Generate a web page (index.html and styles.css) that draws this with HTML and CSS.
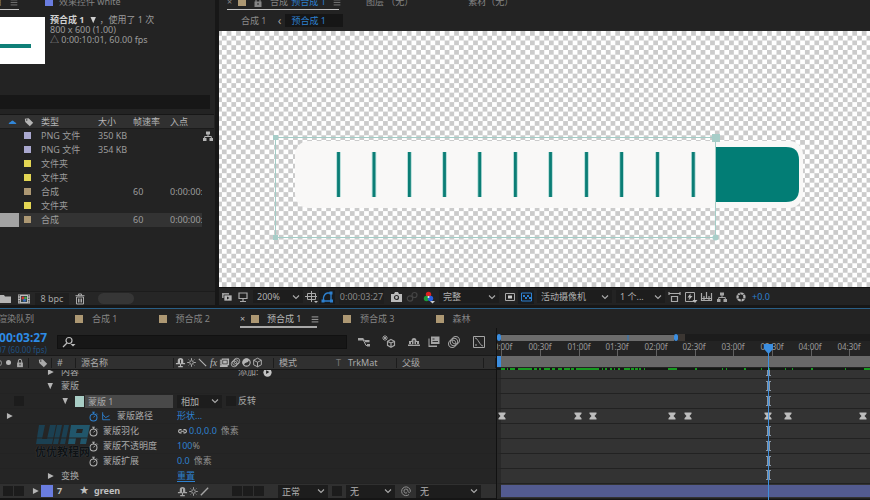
FILE: index.html
```html
<!DOCTYPE html>
<html>
<head>
<meta charset="utf-8">
<title>预合成 1</title>
<link rel="stylesheet" href="styles.css">
</head>
<body>
<svg class="sprite" aria-hidden="true">
  <symbol id="tag" viewBox="0 0 12 12"><path d="M1 2l4.500-.5L11 7l-4 4L1.500 6z" fill="currentColor"/><circle cx="3.300" cy="3.600" r=".9" fill="#2f2f2f"/></symbol>
  <symbol id="menu" viewBox="0 0 12 12"><path d="M2 3.500h8M2 6.500h8M2 9.500h8" stroke="currentColor"/></symbol>
  <symbol id="chev" viewBox="0 0 12 12"><path d="M3 4.500l3 3 3-3" fill="none" stroke="currentColor" stroke-width="1.100"/></symbol>
  <symbol id="right" viewBox="0 0 12 12"><path d="M3.500 2.500l7 3.500-7 3.500z" fill="currentColor"/></symbol>
  <symbol id="down" viewBox="0 0 12 12"><path d="M3 2.500h6.500L6.300 10z" fill="currentColor"/></symbol>
  <symbol id="tree" viewBox="0 0 12 12"><path d="M4 1.500h4v3H4zM1 8h3.500v3H1zM7.500 8H11v3H7.500z" fill="currentColor"/><path d="M6 4v2.500M2.700 8V6.500h6.600V8" fill="none" stroke="currentColor"/></symbol>
  <symbol id="lock" viewBox="0 0 12 12"><path d="M2.500 5.500h7V11h-7z" fill="currentColor"/><path d="M4 6V3.500a2 2 0 0 1 4 0V6" fill="none" stroke="currentColor" stroke-width="1.200"/><path d="M6 7v2" stroke="#222"/></symbol>
  <symbol id="watch" viewBox="0 0 12 12"><circle cx="6" cy="7" r="3.800" fill="none" stroke="currentColor" stroke-width="1.100"/><path d="M4.500 1.300h3M6 1.300v2M6 7l1.800-2M9.500 2.700l1 1" fill="none" stroke="currentColor"/></symbol>
  <symbol id="graph" viewBox="0 0 12 12"><path d="M2 1.500v9h9M2 4l3.500 4L10 5.500" fill="none" stroke="currentColor" stroke-width="1.100"/></symbol>
  <symbol id="shy" viewBox="0 0 12 12"><path d="M3 7V4a3 3 0 0 1 6 0v3zM1 6.500h10v1.500H1z" fill="currentColor"/><path d="M6 7v4M3.500 10.500h5" stroke="currentColor" stroke-width="1.200"/><path d="M6 3v4" stroke="#2b2b2b"/></symbol>
  <symbol id="sun" viewBox="0 0 12 12"><circle cx="6" cy="6" r="2" fill="none" stroke="currentColor"/><path d="M6 1.300v2M6 8.700v2M1.300 6h2M8.700 6h2" stroke="currentColor"/><path d="M2.700 2.700l1 1M8.300 8.300l1 1M9.300 2.700l-1 1M3.700 8.300l-1 1" stroke="currentColor" stroke-width=".7"/></symbol>
  <symbol id="back" viewBox="0 0 12 12"><path d="M2 2l8 8" stroke="currentColor" stroke-width="1.200"/></symbol>
  <symbol id="slash" viewBox="0 0 12 12"><path d="M2 10l8-8" stroke="currentColor" stroke-width="1.500"/></symbol>
  <symbol id="film" viewBox="0 0 12 12"><path d="M1 3h2V1.500h8V9H9.500v1.800H1z" fill="currentColor"/><path d="M4 3.500h5v4H4z" fill="none" stroke="#333" stroke-width=".8"/><path d="M2 4v6" stroke="#333" stroke-dasharray="1 1"/></symbol>
  <symbol id="blur" viewBox="0 0 12 12"><g fill="none" stroke="currentColor" stroke-width=".9"><circle cx="7.500" cy="4.500" r="3.200"/><circle cx="6" cy="6" r="3.200"/><circle cx="4.500" cy="7.500" r="3.200"/></g></symbol>
  <symbol id="adjust" viewBox="0 0 12 12"><circle cx="6" cy="6" r="4" fill="none" stroke="currentColor" stroke-width="1.200"/><path d="M9 3a4.200 4.200 0 1 0-6 6q1-3 3-3t3-3z" fill="currentColor"/></symbol>
  <symbol id="cube" viewBox="0 0 12 12"><path d="M6 1.300l4.200 2.200v5L6 10.700 1.800 8.500v-5zM1.800 3.500L6 5.700l4.200-2.200M6 5.700v5" fill="none" stroke="currentColor"/></symbol>
  <symbol id="cubes" viewBox="0 0 14 14"><path d="M9 4.500l3.500 1.800v4L9 12.300l-3.500-2v-4zM5.500 6.300L9 8l3.500-1.700M9 8v4" fill="none" stroke="currentColor" stroke-width="1.200"/><path d="M3 0v6M0 3h6M1 1l4 4M5 1L1 5" stroke="currentColor" stroke-width=".9"/></symbol>
  <symbol id="flow" viewBox="0 0 14 14"><path d="M1 3h5.500v2.500H1zM8 5h4.500v2.300H8zM10 9h3v2.500h-3z" fill="currentColor"/><path d="M6 4.500l3 6h2M6 4.500L9 6" fill="none" stroke="currentColor"/></symbol>
  <symbol id="shyall" viewBox="0 0 14 14"><path d="M2 9V6h2.500a2.500 3 0 0 1 5 0H12v3zM1 9.500h12V11H1z" fill="currentColor"/><path d="M7 5v5M4.500 7v2M9.500 7v2" stroke="#232323"/></symbol>
  <symbol id="frames" viewBox="0 0 14 14"><path d="M4 1.500h8.500V9H4z" fill="currentColor"/><path d="M2.500 3.500v7h7.500v1.500H1.500v-8.500z" fill="currentColor"/><path d="M5.500 3.500h2v1h-2zM5.500 6h5.500v1H5.500z" fill="#333"/></symbol>
  <symbol id="chart" viewBox="0 0 14 14"><path d="M1.500 1.500h11v11h-11z" fill="none" stroke="currentColor"/><path d="M3 3c3 0 5 8 8 8M3 10h2" fill="none" stroke="currentColor"/></symbol>
  <symbol id="spiral" viewBox="0 0 12 12"><path d="M9 9.500A4.400 4.400 0 1 1 10.400 6c0 2-2.400 2-2.400 0a2 2 0 1 0-1 1.800" fill="none" stroke="currentColor"/></symbol>
  <symbol id="key" viewBox="0 0 8 8"><path d="M.5.500h7v1.200L5.500 4l2 2.300v1.200h-7V6.300l2-2.300-2-2.300z" fill="#bdbdbd"/></symbol>
</svg>

<main class="app">
  <div class="upper">
    <section class="project">
      <div class="tabs">
        <span class="tab on lead"><span>目</span><svg class="i10"><use href="#menu"/></svg></span>
        <span class="tab effects"><i class="sw blue"></i><span>效果控件 white</span></span>
      </div>
      <div class="info">
        <div class="thumb"><i></i></div>
        <div class="meta">
          <div class="title"><b>预合成 1</b><svg class="i10"><use href="#down"/></svg><span>，使用了 1 次</span></div>
          <div>800 x 600 (1.00)</div>
          <div>△ 0:00:10:01, 60.00 fps</div>
        </div>
      </div>
      <input class="find" type="text" aria-label="搜索项目">
      <table class="items">
        <colgroup><col class="c1"><col class="c2"><col class="c3"><col class="c4"><col class="c5"><col class="c6"><col></colgroup>
        <thead><tr><th><svg class="sort" viewBox="0 0 8 4"><path d="M0 4q1-2 2-2Q4-1 6 2q1 0 2 2z" fill="#3186d8"/></svg></th><th><svg class="i10"><use href="#tag"/></svg></th><th>类型</th><th>大小</th><th>帧速率</th><th colspan="2">入点</th></tr></thead>
        <tbody>
          <tr><td></td><td><i class="sw lilac"></i></td><td>PNG 文件</td><td>350 KB</td><td></td><td></td><td class="net"><svg class="i12"><use href="#tree"/></svg></td></tr>
          <tr><td></td><td><i class="sw lilac"></i></td><td>PNG 文件</td><td>354 KB</td><td></td><td></td><td></td></tr>
          <tr><td></td><td><i class="sw yellow"></i></td><td>文件夹</td><td></td><td></td><td></td><td></td></tr>
          <tr><td></td><td><i class="sw yellow"></i></td><td>文件夹</td><td></td><td></td><td></td><td></td></tr>
          <tr><td></td><td><i class="sw tan"></i></td><td>合成</td><td></td><td>60</td><td>0:00:00:</td><td></td></tr>
          <tr><td></td><td><i class="sw yellow"></i></td><td>文件夹</td><td></td><td></td><td></td><td></td></tr>
          <tr class="sel"><td></td><td><i class="sw tan"></i></td><td>合成</td><td></td><td>60</td><td>0:00:00:</td><td></td></tr>
        </tbody>
      </table>
      <div class="pfoot">
        <button aria-label="新建文件夹"><svg class="i12" viewBox="0 0 12 12"><path d="M0 2h4l1 1.500h6V10H0z" fill="#b5b5b5"/></svg></button>
        <button aria-label="新建合成"><svg class="w14" viewBox="0 0 14 12"><path d="M1 1.500h12v9H1z" fill="#bbb"/><path d="M2.200 2v8M11.800 2v8" stroke="#333" stroke-dasharray="1.500 1"/><path d="M4 3h6v6H4z" fill="#344"/><circle cx="6" cy="5" r="1.500" fill="#c33"/><circle cx="8.500" cy="5" r="1.300" fill="#4a4"/><circle cx="7.500" cy="7.300" r="1.500" fill="#36b"/></svg></button>
        <button class="bpc">8 bpc</button>
        <button aria-label="删除"><svg class="i12" viewBox="0 0 12 12"><path d="M2.500 4h7v7h-7zM1.500 2.700h9M4.500 2.500V1h3v1.500M4.500 5.500v4M6 5.500v4M7.500 5.500v4" fill="none" stroke="#aaa"/></svg></button>
        <i class="pill"></i>
      </div>
    </section>

    <section class="viewer">
      <div class="tabs">
        <span class="tab on comp"><span class="x">×</span><i class="sw tan"></i><svg class="i12"><use href="#lock"/></svg><span>合成 <em>预合成 1</em></span><svg class="i10"><use href="#menu"/></svg></span>
        <span class="tab">图层 （无）</span>
        <span class="tab footage">素材（无）</span>
      </div>
      <nav class="crumbs"><a href="#">合成 1</a><span>‹</span><a class="here" href="#">预合成 1</a></nav>
      <svg class="canvas" aria-label="合成画面">
        <defs><pattern id="checks" width="9.480" height="9.480" patternUnits="userSpaceOnUse" x="2.900" y="0"><path d="M0 0h9.480v9.480H0z" fill="#fff"/><path d="M4.740 0h4.740v4.740H4.740zM0 4.740h4.740v4.740H0z" fill="#cbcbcb"/></pattern></defs>
        <rect width="100%" height="100%" fill="url(#checks)"/>
        <rect x="76" y="110" width="508" height="67" rx="14" fill="#f9f8f7"/>
        <path d="M497 116h70q13 0 13 13v29q0 13-13 13h-70z" fill="#027d75"/>
        <path d="M119.500 121v45M155 121v45M190.400 121v45M225.500 121v45M260.700 121v45M296.400 121v45M331.500 121v45M367.500 121v45M402.600 121v45M438.500 121v45M474.300 121v45" stroke="#a9d8d3" stroke-width="4.500"/>
        <path d="M119.500 121v45M155 121v45M190.400 121v45M225.500 121v45M260.700 121v45M296.400 121v45M331.500 121v45M367.500 121v45M402.600 121v45M438.500 121v45M474.300 121v45" stroke="#0b7d75" stroke-width="2.800"/>
        <path d="M56.500 106.500h440v100h-440z" fill="none" stroke="#a3cdc7"/>
        <path d="M54 104h5v5h-5zM493 103h8v8h-8z" fill="#a7cdc8"/><path d="M54 204h5v5h-5z" fill="#a7cdc8"/><circle cx="496.500" cy="206.500" r="3" fill="#a7cdc8"/>
      </svg>
      <div class="vfoot">
        <button aria-label="始终预览"><svg viewBox="0 0 16 14"><path d="M3 3h7v5H3z" fill="#999"/><path d="M5 5h8v6H5z" fill="#b5b5b5" stroke="#222" stroke-width=".7"/><path d="M8 6.500v3l2.500-1.500z" fill="#222"/></svg></button>
        <button aria-label="主查看器"><svg viewBox="0 0 16 14"><path d="M4 3h8v5.500H4zM8 9v2.500M5 11.500h6" fill="none" stroke="#aaa" stroke-width="1.200"/></svg></button>
        <span class="drop zoom"><select aria-label="放大率"><option>200%</option></select><svg class="i12"><use href="#chev"/></svg></span>
        <button aria-label="网格和参考线"><svg viewBox="0 0 16 14"><path d="M4.500 3.500h8v6h-8zM8.500 1v11M2 6.500h12" fill="none" stroke="#aaa"/><path d="M11 11h4l-2 2z" fill="#bbb"/></svg></button>
        <button class="lit" aria-label="蒙版可见性"><svg viewBox="0 0 16 14"><path d="M4.500 11V7.500q1-4 4-4.500H12v8z" fill="none" stroke="#2d80cf" stroke-width="1.300"/><path d="M2.500 9.500h3v3h-3zM11 9.500h3v3h-3zM10.500 1.500h3v3h-3z" fill="#2d80cf"/></svg></button>
        <button class="time">0:00:03:27</button>
        <button aria-label="快照"><svg viewBox="0 0 16 14"><path d="M3 4h3l1-2h3l1 2h3v8H3z" fill="#bbb"/><circle cx="8.500" cy="7.500" r="2" fill="none" stroke="#2a2a2a" stroke-width="1.200"/></svg></button>
        <button aria-label="显示快照"><svg viewBox="0 0 16 14"><g fill="none" stroke="#444" stroke-width="1.200"><circle cx="10.500" cy="5" r="2.500"/><circle cx="6" cy="8.500" r="2.700"/></g></svg></button>
        <button aria-label="通道"><svg viewBox="0 0 16 14"><circle cx="8.500" cy="4.500" r="2.700" fill="#d22"/><circle cx="6.500" cy="8.500" r="2.700" fill="#1b9d3a"/><circle cx="10.500" cy="8.500" r="2.700" fill="#2a5fe0"/><circle cx="8.500" cy="7" r="1" fill="#eee"/><path d="M10 11h5l-2.500 2.500z" fill="#ccc"/></svg></button>
        <span class="drop res"><select aria-label="分辨率"><option>完整</option></select><svg class="i12"><use href="#chev"/></svg></span>
        <button aria-label="目标区域"><svg viewBox="0 0 16 14"><path d="M3.500 3.500h9v7h-9z" fill="none" stroke="#aaa"/><path d="M6 5.500h4v3H6z" fill="#ccc"/></svg></button>
        <button class="lit" aria-label="透明网格"><svg viewBox="0 0 16 14"><path d="M3.500 3h10v8h-10z" fill="none" stroke="#2d80cf"/><path d="M5 5h2v2H5zM9 5h2v2H9zM7 7h2v2H7zM11 7h2v2h-2z" fill="#2d80cf"/></svg></button>
        <span class="drop cam"><select aria-label="视图"><option>活动摄像机</option></select><svg class="i12"><use href="#chev"/></svg></span>
        <span class="drop views"><select aria-label="视图布局"><option>1 个...</option></select><svg class="i12"><use href="#chev"/></svg></span>
        <button aria-label="像素长宽比"><svg viewBox="0 0 16 14"><path d="M5.500 6.500h6v5h-6zM3 2v3M14 2v3M3 3.500h11" fill="none" stroke="#aaa" stroke-width="1.200"/></svg></button>
        <button aria-label="快速预览"><svg viewBox="0 0 16 14"><path d="M3.500 2.500h9v9h-9z" fill="none" stroke="#aaa"/><path d="M8.500 3.500L5.500 7.500h2l-1 3 4-4.500h-2z" fill="#bbb"/><path d="M10.500 10h5L13 13z" fill="#bbb"/></svg></button>
        <button aria-label="时间轴"><svg viewBox="0 0 16 14"><path d="M3.500 3v7.500h10V3M6 6v4M8.500 2v6M11 6v4M3.500 8.500h10" fill="none" stroke="#aaa" stroke-width="1.200"/></svg></button>
        <button class="tree" aria-label="流程图"><svg class="i12"><use href="#tree"/></svg></button>
        <button aria-label="重置曝光度"><svg viewBox="0 0 16 14"><circle cx="8" cy="7" r="3.500" fill="none" stroke="#b5b5b5" stroke-width="2.200"/><path d="M6 2l2 3M12 4L9.500 5M12.500 9L10 8.500M8 12l.5-3M3.500 9.500L6 8M4 4.500L6.500 6" stroke="#252525" stroke-width=".7"/></svg></button>
        <a href="#">+0.0</a>
      </div>
    </section>
  </div>

  <section class="timeline">
    <div class="ttabs">
      <span class="queue">渲染队列</span>
      <span class="ttab"><i class="sw tan"></i>合成 1</span>
      <span class="ttab second"><i class="sw tan"></i>预合成 2</span>
      <span class="ttab on"><span class="x">×</span><i class="sw tan"></i>预合成 1<svg class="i10"><use href="#menu"/></svg></span>
      <span class="ttab third"><i class="sw tan"></i>预合成 3</span>
      <span class="ttab fourth"><i class="sw tan"></i>森林</span>
    </div>
    <div class="split">
      <div class="outline">
        <div class="tools">
          <div class="clock"><b>0:00:03:27</b><small>00207 (60.00 fps)</small></div>
          <label class="search"><svg viewBox="0 0 16 12"><circle cx="8" cy="4.500" r="3" fill="none" stroke="#bbb" stroke-width="1.200"/><path d="M6 7l-4 4" stroke="#bbb" stroke-width="1.300"/><path d="M9.500 8h5L12 10.500z" fill="#bbb"/></svg><input type="text" aria-label="搜索图层"></label>
          <div class="tbtns">
            <button aria-label="微型流程图"><svg class="i14"><use href="#flow"/></svg></button>
            <button aria-label="草图 3D"><svg class="i14"><use href="#cubes"/></svg></button>
            <button aria-label="隐藏图层"><svg class="i14"><use href="#shyall"/></svg></button>
            <button aria-label="帧混合"><svg class="i14"><use href="#frames"/></svg></button>
            <button aria-label="运动模糊"><svg class="i14"><use href="#blur"/></svg></button>
            <button aria-label="图表编辑器"><svg class="i14"><use href="#chart"/></svg></button>
          </div>
        </div>
        <div class="heads">
          <span class="av"><i class="eye"></i><i class="dot"></i><svg class="i10"><use href="#lock"/></svg></span>
          <span class="hl"><svg class="i10"><use href="#tag"/></svg></span>
          <span class="hn">#</span>
          <span class="hs">源名称</span>
          <span class="sws"><svg><use href="#shy"/></svg><svg><use href="#sun"/></svg><svg><use href="#back"/></svg><i class="fx">fx</i><svg><use href="#film"/></svg><svg><use href="#blur"/></svg><svg><use href="#adjust"/></svg><svg><use href="#cube"/></svg></span>
          <span class="hm">模式</span><span class="ht">T</span><span class="hk">TrkMat</span><span class="hp">父级</span><span></span>
        </div>
        <div class="layers">
          <div class="row cut"><div class="nm l1"><svg><use href="#right"/></svg><span>内容</span></div><div class="val add">添加:<svg viewBox="0 0 12 12"><circle cx="6" cy="6" r="4.500" fill="#c4c4c4"/><path d="M4.500 3.500v4l3.500-2z" fill="#222"/></svg></div></div>
          <div class="row"><div class="nm l1"><svg><use href="#down"/></svg><span>蒙版</span></div></div>
          <div class="row"><div class="nm l2"><i class="box"></i><svg><use href="#down"/></svg><i class="mint"></i><span class="field">蒙版 1</span></div><div class="val"><span class="drop mode"><select aria-label="蒙版模式"><option>相加</option></select><svg class="i12"><use href="#chev"/></svg></span><label class="inv"><input type="checkbox">反转</label></div></div>
          <div class="row"><div class="nm l3 keyed"><svg><use href="#right"/></svg><svg class="watch b"><use href="#watch"/></svg><svg class="b"><use href="#graph"/></svg><span>蒙版路径</span></div><div class="val"><a href="#">形状...</a></div></div>
          <div class="row"><div class="nm l3"><svg class="watch"><use href="#watch"/></svg><span>蒙版羽化</span></div><div class="val"><svg class="chain" viewBox="0 0 12 12"><path d="M5 4H3.500a1.700 1.700 0 0 0 0 3.500H5M7 4h1.500a1.700 1.700 0 0 1 0 3.500H7M4 5.700h4" fill="none" stroke="#bbb" stroke-width="1.200"/></svg><a href="#">0.0,0.0</a>像素</div></div>
          <div class="row"><div class="nm l3"><svg class="watch"><use href="#watch"/></svg><span>蒙版不透明度</span></div><div class="val pct"><a href="#">100</a>%</div></div>
          <div class="row"><div class="nm l3"><svg class="watch"><use href="#watch"/></svg><span>蒙版扩展</span></div><div class="val"><a href="#">0.0</a>像素</div></div>
          <div class="row"><div class="nm l1"><svg><use href="#right"/></svg><span>变换</span></div><div class="val"><a class="reset" href="#">重置</a></div></div>
          <div class="row layer"><div class="nm"><i class="box"></i><i class="box"></i><svg><use href="#right"/></svg><i class="periw"></i><b>7</b><span class="star">★</span><b>green</b></div>
            <div class="val"><span class="sws"><svg><use href="#shy"/></svg><svg><use href="#sun"/></svg><svg class="hi"><use href="#slash"/></svg></span><span class="boxes"><i class="box"></i><i class="box"></i><i class="box"></i></span><span class="drop blend"><select aria-label="混合模式"><option>正常</option></select><svg class="i12"><use href="#chev"/></svg></span><i class="box"></i><span class="drop matte"><select aria-label="轨道遮罩"><option>无</option></select><svg class="i12"><use href="#chev"/></svg></span><svg class="i12 whip"><use href="#spiral"/></svg><span class="drop parent"><select aria-label="父级"><option>无</option></select><svg class="i12"><use href="#chev"/></svg></span></div></div>
          <div class="wm"><svg viewBox="0 0 55 19"><path d="M4 0h6L7 14h5L15 0h6l-4 19H1zM22 0h5l-4 19h-5zM29 0h5l-4 19h-5z" fill="#1b4052"/><path d="M36 0h19l-4 19h-6l1-6h-5l-1 6h-7zM42 4l-1 4h6l1-4z" fill="#21566b"/><path d="M0 13h52" stroke="#252525"/></svg><b>优优教程网</b></div>
        </div>
      </div>
      <div class="time-area">
        <div class="nav"><i class="h"></i><i class="span"></i><i class="h"></i><i class="rest"></i></div>
        <svg class="ruler"><path d="M4.500 8v7M43.500 8v7M82.500 8v7M120.500 8v7M159.500 8v7M198.500 8v7M236.500 8v7M275.500 8v7M314.500 8v7M352.500 8v7" stroke="#606060"/><g text-anchor="middle"><text x="6" y="9">0:00f</text><text x="43" y="9">00:30f</text><text x="82" y="9">01:00f</text><text x="120" y="9">01:30f</text><text x="159" y="9">02:00f</text><text x="197" y="9">02:30f</text><text x="236" y="9">03:00f</text><text x="275" y="9">03:30f</text><text x="313" y="9">04:00f</text><text x="352" y="9">04:30f</text></g></svg>
        <div class="work"><i></i></div>
        <svg class="cache"><path d="M4 1h4M10 1h1M13 1h5M21 1h14M37 1h3M42 1h2M47 1h6M55 1h3M61 1h4M67 1h6M74 1h3M79 1h23M105 1h1M108 1h2M113 1h2M117 1h1M121 1h2M127 1h6M134 1h3M138 1h3M142 1h2M147 1h1M171 1h9M198 1h2M225 1h1M229 1h1M247 1h2M264 1h1M271 1h2M288 1h1M295 1h1M314 1h2M348 1h1M367 1h10" stroke="#179a20" stroke-width="2"/></svg>
        <div class="tracks">
          <div class="track cut"></div><div class="track"></div><div class="track"></div>
          <div class="track"><svg><use href="#key" x="1" y="3" width="8" height="8"/><use href="#key" x="77" y="3" width="8" height="8"/><use href="#key" x="92" y="3" width="8" height="8"/><use href="#key" x="171" y="3" width="8" height="8"/><use href="#key" x="187" y="3" width="8" height="8"/><use href="#key" x="267" y="3" width="8" height="8"/><use href="#key" x="287" y="3" width="8" height="8"/><use href="#key" x="362" y="3" width="8" height="8"/></svg></div>
          <div class="track"></div><div class="track"></div><div class="track"></div><div class="track"></div>
          <div class="track bar"><i></i></div>
        </div>
        <svg class="playhead" viewBox="0 0 10 157"><path d="M1 1h9v5L5.500 11 1 6z" fill="#3b8ee0"/><path d="M5.500 27v5M5.500 38v10M5.500 53v10M5.500 83v10M5.500 98v10M5.500 113v10M5.500 127v10" stroke="#8c98a6" stroke-width="3"/><path d="M3 32.500h5M3 38.500h5M3 47.500h5M3 53.500h5M3 62.500h5M3 83.500h5M3 92.500h5M3 98.500h5M3 107.500h5M3 113.500h5M3 122.500h5M3 127.500h5M3 136.500h5" stroke="#8c98a6"/><path d="M5.500 9v148" stroke="#3f8fdc"/></svg>
      </div>
    </div>
  </section>
</main>
</body>
</html>
```
FILE: styles.css
```css
* { box-sizing: border-box; }
body { margin: 0; background: #171717; color: #9c9c9c; font: 9px/12px "Noto Sans", "Noto Sans CJK SC", sans-serif; overflow: hidden; }
.sprite { position: absolute; width: 0; height: 0; }
svg { display: block; flex: none; }
i, em { font-style: normal; }
i { display: block; flex: none; }
a { color: #2d80cf; text-decoration: none; }
button { display: grid; place-items: center; padding: 0; border: 0; background: none; color: #a5a5a5; font: inherit; }
input { font: inherit; color: #bbb; border: 0; padding: 0; margin: 0; min-width: 0; outline: 0; }
.i10 { width: 10px; height: 10px; }
.i12 { width: 12px; height: 12px; }
.i14 { width: 14px; height: 14px; }
.w14 { width: 14px; height: 12px; }
.sw { width: 8px; height: 8px; }
.tan { background: #ad9873; }
.lilac { background: #aaa8cf; }
.yellow { background: #e3d653; }
.blue { background: #6a7de0; }

.app { display: flex; flex-direction: column; height: 100vh; }
.upper { display: flex; flex: none; gap: 4px; height: 308px; padding-bottom: 3px; }
.project { display: flex; flex-direction: column; width: 215px; background: #232323; overflow: hidden; }
.viewer { display: flex; flex-direction: column; flex: 1; min-width: 0; background: #232323; }

.tabs { display: flex; align-items: flex-end; height: 10px; overflow: hidden; white-space: nowrap; color: #858585; flex: none; }
.tab { display: flex; align-items: center; height: 15px; padding-bottom: 1px; }
.tab.on { border-bottom: 1px solid #c4c4c4; padding-bottom: 0; }
.lead { width: 19px; justify-content: flex-end; gap: 7px; }
.effects { margin-left: 26px; gap: 6px; font-size: 9px; }

.info { display: flex; gap: 5px; margin-top: 7px; height: 78px; flex: none; }
.thumb { width: 45px; height: 47px; background: #fff; padding-top: 27px; }
.thumb i { width: 31px; height: 4px; background: #107f78; }
.meta { line-height: 10px; margin-top: -2px; white-space: nowrap; }
.title { display: flex; align-items: center; }
.title svg { margin: 0 2px 0 3px; color: #d0d0d0; }
.meta b { color: #d0d0d0; }
.find { width: 210px; height: 14px; background: #171717; flex: none; }
.items { margin-top: 5px; width: 214px; table-layout: fixed; border-collapse: collapse; }
.items col.c1 { width: 21px; } .items col.c2 { width: 20px; } .items col.c3 { width: 57px; }
.items col.c4 { width: 35px; } .items col.c5 { width: 37px; } .items col.c6 { width: 32px; }
.items th, .items td { padding: 0; height: 14px; font-weight: 400; text-align: left; white-space: nowrap; overflow: hidden; line-height: 12px; }
.items th { height: 14px; background: #303030; border-top: 1px solid #171717; border-bottom: 1px solid #1b1b1b; color: #b5b5b5; }
.items th .i10 { margin-left: 3px; }
.items td .sw { margin-left: 3px; width: 7px; height: 7px; }
.sort { width: 9px; height: 4px; margin-left: 8px; }
.items .net { color: #b5b5b5; }
.items .sel td { background: #333; }
.items .sel td:first-child { background: linear-gradient(90deg, #a3a3a3 19px, #333 19px); }
.items .sel td:last-child { background: none; }
.pfoot { display: flex; align-items: center; height: 14px; margin-top: auto; border-top: 1px solid #1c1c1c; background: #262626; flex: none; }
.pfoot button:nth-child(2) { margin-left: 5px; }
.pfoot .bpc { width: 34px; height: 12px; margin: 0 5px 0 4px; background: #1f1f1f; }
.pill { width: 36px; height: 11px; margin-left: 12px; border-radius: 6px; background: #363636; }

.comp { margin-left: 8px; width: 112px; gap: 6px; }
.comp em { color: #2d80cf; margin-left: 1px; }
.comp .x { width: 5px; }
.viewer .tab.comp { margin-right: 27px; }
.footage { margin-left: 55px; }
.crumbs { display: flex; align-items: center; height: 21px; padding-left: 22px; flex: none; }
.crumbs a { color: #8a8a8a; }
.crumbs span { width: 20px; text-align: center; margin-left: 3px; font-size: 12px; }
.crumbs .here { width: 58px; height: 13px; margin-left: -5px; padding-left: 7px; background: #161616; color: #2d80cf; line-height: 13px; }
.canvas { width: 100%; height: 256px; }
.vfoot { display: flex; align-items: center; flex: 1; min-height: 0; border-top: 1px solid #111; }
.vfoot > button { width: 16px; height: 14px; flex: none; }
.vfoot > button svg { width: 16px; height: 14px; }
.vfoot > button.tree svg { width: 12px; height: 12px; }
.vfoot .lit { background: #181b1e; }
.vfoot > .time { width: 45px; margin: 0 4px; background: #1f1f1f; color: #8a8a8a; }
.vfoot a { margin-left: 3px; }
.vfoot .tree + button { margin-left: 3px; }
.drop { display: grid; align-items: center; height: 13px; background: #1d1d1d; color: #aaa; flex: none; }
.drop > * { grid-area: 1 / 1; }
.drop svg { justify-self: end; pointer-events: none; margin-right: 1px; }
select { appearance: none; width: 100%; height: 13px; padding: 0 0 0 4px; border: 0; background: none; color: #b0b0b0; font: inherit; line-height: 13px; }
.drop.zoom { width: 50px; margin-left: 2px; }
.drop.res { width: 60px; margin: 0 3px; }
.drop.cam { width: 75px; margin-left: 3px; }
.drop.views { width: 49px; margin: 0 1px 0 4px; }

.timeline { display: flex; flex-direction: column; flex: 1; min-height: 0; border-top: 1px solid #2a5f86; background: #232323; }
.ttabs { display: flex; height: 19px; color: #858585; flex: none; white-space: nowrap; align-items: flex-start; }
.queue { width: 34px; display: flex; justify-content: flex-end; line-height: 19px; overflow: hidden; }
.ttab { display: flex; align-items: center; gap: 9px; height: 19px; margin-left: 41px; }
.ttab.on { gap: 8px; width: 77px; margin-left: 30px; border-bottom: 2px solid #a8a8a8; color: #b5b5b5; padding-top: 2px; }
.ttab.on .x { width: 4px; margin-right: -1px; }
.ttab.third { margin-left: 26px; }
.split { display: flex; flex: 1; min-height: 0; }
.outline { display: flex; flex-direction: column; width: 497px; border-right: 1px solid #111; flex: none; }
.tools { display: flex; height: 27px; flex: none; }
.clock { width: 47px; height: 27px; display: flex; flex-direction: column; align-items: flex-end; overflow: hidden; white-space: nowrap; color: #2d8ce6; padding-top: 3px; }
.clock b { font-size: 12px; line-height: 13px; }
.clock small { font-size: 8px; line-height: 11px; color: #1f5080; }
.search { display: flex; align-items: center; width: 290px; height: 14px; margin: 7px 0 0 10px; background: #171717; border: 1px solid #111; }
.search svg { width: 16px; height: 12px; margin-left: 3px; }
.search input { flex: 1; background: none; height: 12px; }
.tbtns { display: flex; align-items: center; height: 14px; margin: 7px 0 0 10px; }
.tbtns button + button { margin-left: 6px; }
.tbtns button:nth-child(2), .tbtns button:nth-child(3), .tbtns button:last-child { margin-left: 11px; }
.heads { display: grid; grid-template-columns: 29px 23px 24px 98px 100px 60px 11px 52px 87px 1fr; height: 15px; align-items: center; background: #303030; border-top: 1px solid #191919; border-bottom: 1px solid #151515; color: #aaa; flex: none; }
.heads > span { height: 10px; line-height: 10px; border-right: 1px solid #1c1c1c; display: flex; align-items: center; }
.heads .ht, .heads .hm { border-right-color: transparent; }
.av .eye { width: 4px; height: 6px; border: 1px solid #888; border-left: 0; border-radius: 0 3px 3px 0; margin-left: -2px; }
.av .dot { width: 5px; height: 5px; border-radius: 50%; background: #bbb; margin: 0 4px; }
.hl { padding-left: 9px; }
.heads .hn { padding-left: 5px; }
.hs, .hm, .hk, .hp { padding-left: 5px; }
.heads .ht { padding-left: 2px; color: #777; }
.heads .hk { padding-left: 3px; }
.sws { display: flex; align-items: center; }
.sws svg, .sws .fx { width: 11px; height: 11px; }
.heads .sws { padding-left: 1px; color: #b5b5b5; }
.fx { font: italic 10px/11px "Liberation Serif", serif; text-align: center; }
.layers { position: relative; flex: 1; min-height: 0; background: #252525; overflow: hidden; }
.row { display: flex; height: 15px; align-items: center; border-bottom: 1px solid #232323; white-space: nowrap; }
.row.cut { height: 9px; align-items: flex-end; overflow: hidden; }
.row > div { display: flex; align-items: center; }
.nm { width: 177px; color: #a8a8a8; }
.nm svg { width: 10px; height: 10px; color: #b5b5b5; }
.l1 { padding-left: 45px; gap: 6px; }
.l2 { padding-left: 14px; }
.l2 svg { margin-left: 35px; }
.box { width: 10px; height: 10px; background: #1c1c1c; margin-right: 1px; }
.mint { width: 9px; height: 11px; background: #a8cdc5; margin: 0 1px 0 5px; }
.field { width: 88px; height: 13px; padding-left: 3px; background: #494949; line-height: 13px; }
.l3 { padding-left: 88px; gap: 4px; }
.l3.keyed { padding-left: 4px; gap: 0; }
.nm .watch { width: 11px; height: 11px; }
.keyed .watch { margin-left: 74px; }
.nm.keyed .b { color: #2d80cf; }
.keyed span { margin-left: 6px; }
.keyed .b + .b { margin-left: 2px; }
.val { gap: 4px; color: #8d8d8d; }
.val.pct { gap: 0; }
.val .chain { width: 11px; height: 11px; margin-right: -3px; }
.val.add { padding-left: 61px; color: #a0a0a0; }
.add svg { width: 11px; height: 11px; }
.reset { border-bottom: 1px solid #2d80cf; line-height: 10px; }
.drop.mode { width: 45px; }
.inv { display: flex; align-items: center; gap: 2px; color: #a5a5a5; }
.inv input { appearance: none; width: 10px; height: 10px; background: #1c1c1c; }
.row.layer { height: 16px; background: #303030; border-bottom: 2px solid #151515; }
.layer .nm { padding-left: 3px; color: #c0c0c0; }
.layer .nm svg { margin: 0 1px 0 5px; }
.periw { width: 12px; height: 12px; background: #6a7de0; }
.layer .nm b:first-of-type { margin-left: 4px; }
.star { font: 11px/12px "DejaVu Sans", sans-serif; margin: 0 5px 0 17px; }
.layer .val { gap: 0; }
.layer .val .sws { width: 55px; color: #a5a5a5; }
.boxes { display: flex; margin-right: 13px; }
.drop.blend { width: 50px; margin-right: 4px; }
.drop.matte { width: 49px; margin: 0 5px 0 3px; }
.drop.parent { width: 65px; margin-left: 4px; }
.wm { position: absolute; left: 35px; top: 55px; width: 56px; }
.wm svg { width: 55px; height: 19px; }
.wm b { display: block; font-size: 11px; line-height: 15px; color: #0e1214; text-shadow: 0 0 1px #4a5054; }

.time-area { position: relative; flex: 1; min-width: 0; display: flex; flex-direction: column; background: #232323; overflow: hidden; }
.nav { display: flex; align-items: center; height: 7px; margin-top: 6px; background: #1c1c1c; flex: none; }
.nav .h { width: 4px; height: 7px; background: #3b8ee0; border-radius: 2px; }
.nav .span { width: 173px; height: 6px; background: linear-gradient(90deg, #6c6c6c 126px, #4c7296 126px, #4c7296 128px, #6c6c6c 128px); }
.nav .rest { width: 7px; height: 7px; background: #3b3632; }
.ruler { width: 100%; height: 15px; }
.ruler text { font-size: 8px; fill: #9a9a9a; }
.work { height: 11px; padding-left: 4px; background: #3b8ee0; flex: none; margin-bottom: 1px; }
.work i { height: 11px; background: #686868; }
.cache { width: 100%; height: 2px; background: #131713; }
.tracks { flex: 1; min-height: 0; background: #151515; overflow: hidden; }
.track { height: 15px; border-left: 4px solid #292929; background: #333; border-bottom: 1px solid #222; }
.track.cut { height: 9px; }
.track svg { width: 100%; height: 14px; margin-left: -4px; overflow: visible; }
.track.bar { padding-top: 1px; }
.track.bar i { height: 12px; background: #535b90; }
.playhead { position: absolute; left: 266px; top: 15px; width: 10px; height: 157px; }
```
